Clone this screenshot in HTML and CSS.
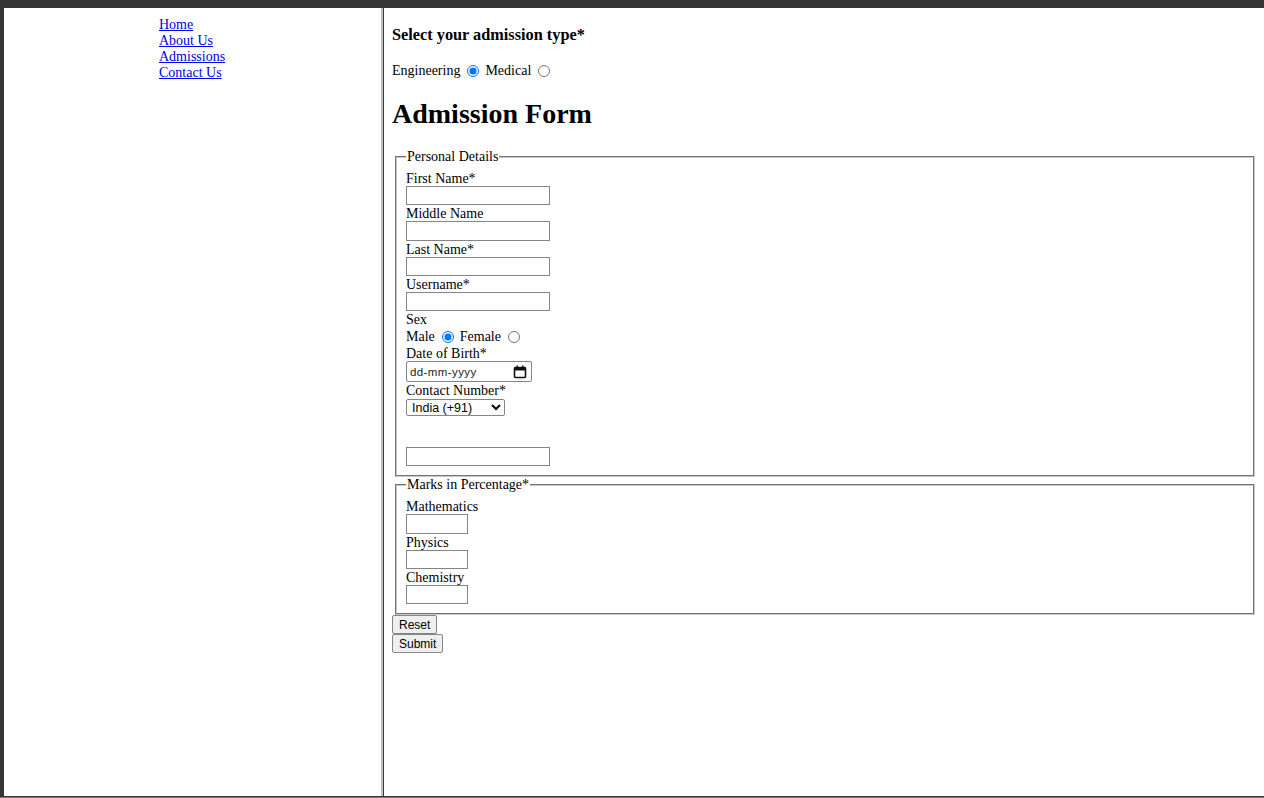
FILE: index.html
```html
<!DOCTYPE html>
<html lang="en">
<head>
<meta charset="utf-8">
<title>Admission Form</title>
<link rel="stylesheet" href="styles.css">
</head>
<body>
<div class="window">
  <div class="frames">
    <nav class="nav-frame">
      <a href="#" class="nav-link">Home</a>
      <a href="#" class="nav-link">About Us</a>
      <a href="#" class="nav-link">Admissions</a>
      <a href="#" class="nav-link">Contact Us</a>
    </nav>
    <main class="form-frame">
      <h4 class="type-title">Select your admission type*</h4>
      <div class="type-row">
        <span>Engineering</span><input type="radio" name="type" class="radio" checked>
        <span>Medical</span><input type="radio" name="type" class="radio">
      </div>
      <h1 class="form-title">Admission Form</h1>
      <form class="form">
        <fieldset class="group">
          <legend class="legend">Personal Details</legend>
          <div class="label">First Name*</div>
          <input type="text" class="text-input">
          <div class="label">Middle Name</div>
          <input type="text" class="text-input">
          <div class="label">Last Name*</div>
          <input type="text" class="text-input">
          <div class="label">Username*</div>
          <input type="text" class="text-input">
          <div class="label">Sex</div>
          <div class="radio-row">
            <span>Male</span><input type="radio" name="sex" class="radio" checked>
            <span>Female</span><input type="radio" name="sex" class="radio">
          </div>
          <div class="label">Date of Birth*</div>
          <div class="date-field">
            <span class="date-text">dd-mm-yyyy</span>
            <svg class="cal-icon" width="14" height="14" viewBox="0 0 14 14" aria-hidden="true">
              <rect x="1.5" y="2.5" width="11" height="10" rx="1" fill="none" stroke="#111" stroke-width="1.6"/>
              <rect x="1.5" y="2.5" width="11" height="3" fill="#111"/>
              <rect x="3.5" y="0.5" width="1.5" height="3" fill="#111"/>
              <rect x="9" y="0.5" width="1.5" height="3" fill="#111"/>
            </svg>
          </div>
          <div class="label">Contact Number*</div>
          <select class="country">
            <option>India (+91)</option>
          </select>
          <input type="text" class="text-input phone">
        </fieldset>
        <fieldset class="group">
          <legend class="legend">Marks in Percentage*</legend>
          <div class="label">Mathematics</div>
          <input type="text" class="mark-input">
          <div class="label">Physics</div>
          <input type="text" class="mark-input">
          <div class="label">Chemistry</div>
          <input type="text" class="mark-input">
        </fieldset>
        <button type="reset" class="btn">Reset</button>
        <button type="submit" class="btn">Submit</button>
      </form>
    </main>
  </div>
</div>
</body>
</html>
```

FILE: styles.css
```css
html, body {
  margin: 0;
  padding: 0;
}

body {
  background: #353535;
  font-family: "Liberation Serif", "Times New Roman", serif;
  font-size: 14px;
  line-height: 16px;
  color: #000;
}

.window {
  width: 1264px;
  height: 798px;
  box-sizing: border-box;
  padding: 8px 0 1px 4px;
  background: #353535;
  border-bottom: 1px solid #7a7a7a;
}

.frames {
  display: flex;
  height: 100%;
}

.nav-frame {
  flex: none;
  box-sizing: border-box;
  width: 379px;
  padding: 9px 0 0 155px;
  background: #fff;
  border-right: 2px solid #bdbdbd;
  display: flex;
  flex-direction: column;
  align-items: flex-start;
}

.nav-link {
  color: #0000ee;
  text-decoration: underline;
  line-height: 16px;
}

.form-frame {
  flex: 1;
  background: #fff;
  border-left: 1px solid #3a3a3a;
  padding: 18px 7px 0 8px;
}

.type-title {
  margin: 0;
  font-size: 16.3px;
  font-weight: bold;
  line-height: 18px;
}

.type-row,
.radio-row {
  display: flex;
  align-items: center;
  margin-top: 19px;
  height: 16px;
}

.radio-row {
  margin-top: 1px;
  height: 17px;
}

.radio {
  width: 12px;
  height: 12px;
  margin: 0 6px 0 7px;
  accent-color: #0075ff;
}

.form-title {
  margin: 18px 0 0;
  font-size: 28px;
  line-height: 33px;
  font-weight: bold;
}

.form {
  margin-top: 19px;
}

.group {
  margin: 0 2px 0 3px;
  padding: 5px 9px 9px 9px;
  border: 2px groove #c8c8c8;
}

.legend {
  padding: 0 1px;
  margin-left: 0;
  line-height: 16px;
}

.label {
  line-height: 16px;
  padding-top: 1px;
  margin-bottom: -1px;
}

.text-input,
.mark-input {
  display: block;
  box-sizing: border-box;
  width: 144px;
  height: 19.3px;
  margin: 0;
  padding: 0 2px;
  border: 1px solid #858585;
  border-radius: 0;
  background: #fff;
}

.mark-input {
  width: 62px;
}

.phone {
  margin-top: 31px;
}

.date-field {
  box-sizing: border-box;
  width: 126px;
  height: 21px;
  border: 1px solid #858585;
  border-radius: 2px;
  display: flex;
  align-items: center;
  justify-content: space-between;
  padding: 0 4px 0 3px;
  font-family: "Liberation Sans", Arial, sans-serif;
  font-size: 11.5px;
  color: #222;
}

.date-text {
  letter-spacing: 0.4px;
}

.cal-icon {
  display: block;
}

.country {
  display: block;
  box-sizing: border-box;
  width: 99px;
  height: 17px;
  margin-top: 1px;
  padding: 0 0 0 1px;
  font-family: "Liberation Sans", Arial, sans-serif;
  font-size: 12.5px;
  border: 1px solid #858585;
  border-radius: 2px;
  background: #fff;
  color: #000;
}

.btn {
  display: block;
  box-sizing: border-box;
  height: 19px;
  margin: 0;
  padding: 0 6px;
  font-family: "Liberation Sans", Arial, sans-serif;
  font-size: 12px;
  line-height: 16px;
  color: #000;
  background: #efefef;
  border: 1px solid #858585;
  border-radius: 2px;
}
```
